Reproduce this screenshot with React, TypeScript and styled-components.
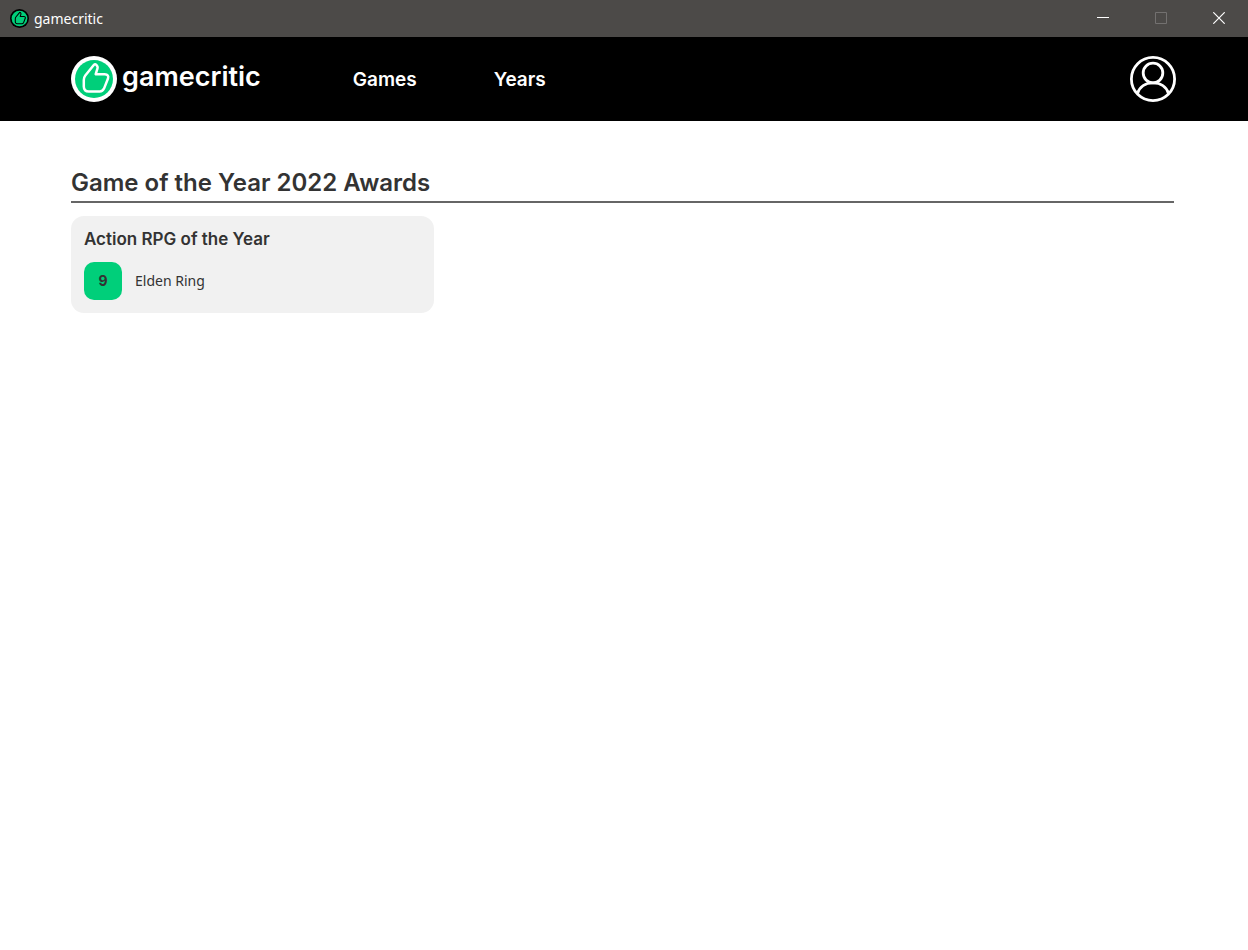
import React from "react";
import styled, { createGlobalStyle } from "styled-components";

const GlobalStyle = createGlobalStyle`
  *, *::before, *::after { box-sizing: border-box; }
  body {
    margin: 0;
    background: #fff;
    color: #333;
    font-family: "Noto Sans", "Open Sans", sans-serif;
    font-size: 14px;
  }
  h1, h2, p { margin: 0; }
`;

const headingFont = `"Inter", "Noto Sans", sans-serif`;

const TitleBar = styled.div`
  display: flex;
  align-items: center;
  height: 37px;
  padding-left: 10px;
  background: #4c4a48;
  color: #fff;
`;

const WindowTitle = styled.span`
  flex: 1;
  margin-left: 5px;
  line-height: 20px;
`;

const WindowButton = styled.button`
  display: flex;
  align-items: center;
  justify-content: center;
  width: 58px;
  height: 36px;
  padding: 0 0 2px;
  border: 0;
  background: none;
  color: #fff;

  &:disabled { color: #737170; }
`;

const Header = styled.header`
  display: flex;
  align-items: center;
  height: 84px;
  padding: 0 72px 0 71px;
  background: #000;
  color: #fff;
`;

const Brand = styled.a`
  display: flex;
  align-items: center;
  color: inherit;
  text-decoration: none;
`;

const BrandName = styled.span`
  margin-left: 5px;
  padding-bottom: 5px;
  font: 600 27px/36px ${headingFont};
`;

const Nav = styled.nav`
  display: flex;
  flex: 1;
  gap: 77px;
  margin-left: 92px;
  padding-top: 2px;
`;

const NavLink = styled.a`
  color: inherit;
  font: 600 19px/28px ${headingFont};
  text-decoration: none;
`;

const ProfileButton = styled.button`
  display: flex;
  padding: 0;
  border: 0;
  background: none;
  color: inherit;
`;

const Main = styled.main`
  padding: 46px 74px 46px 71px;
`;

const PageTitle = styled.h1`
  padding-bottom: 2px;
  border-bottom: 2px solid #666;
  font: 600 24px/32px ${headingFont};
`;

const AwardGrid = styled.div`
  display: grid;
  grid-template-columns: repeat(auto-fill, minmax(340px, 1fr));
  gap: 7px;
  margin-top: 13px;
`;

const AwardCard = styled.section`
  padding: 11px 13px 13px;
  border-radius: 13px;
  background: #f1f1f1;
`;

const AwardTitle = styled.h2`
  font: 600 17px/24px ${headingFont};
`;

const Winner = styled.div`
  display: flex;
  align-items: center;
  gap: 13px;
  margin-top: 11px;
`;

const WinnerName = styled.p`
  padding-bottom: 1px;
  line-height: 20px;
`;

const Score = styled.span`
  display: flex;
  align-items: center;
  justify-content: center;
  width: 38px;
  height: 38px;
  border-radius: 10px;
  background: #00cf7a;
  font: 700 14px/20px ${headingFont};
`;

function Logo({ size, ring }: { size: number; ring: string }) {
  return (
    <svg width={size} height={size} viewBox="0 0 46 46" aria-hidden="true">
      <circle cx="23" cy="23" r="23" fill={ring} />
      <circle cx="23" cy="23" r="19" fill="#00cf7a" />
      <path
        d="M23 8.800Q24.100 7.500 25.200 8.800L26.300 10.300Q26.900 11.200 26.500 12.300L24.700 18.200H33.700Q38.200 18.600 37 22.500L33 32.600Q31.700 35.500 28.800 35.500H17.800Q12.800 35.500 12.800 30.600V24Q12.800 21.400 14.300 19.500Z"
        fill="none"
        stroke={ring}
        strokeWidth="2.5"
        strokeLinejoin="round"
      />
    </svg>
  );
}

export default function App() {
  return (
    <>
      <GlobalStyle />
      <TitleBar>
        <Logo size={19} ring="#000" />
        <WindowTitle>gamecritic</WindowTitle>
        <WindowButton aria-label="Minimize">
          <svg width="12" height="12" viewBox="0 0 12 12" fill="none" stroke="currentColor">
            <path d="M0 5.5H12" />
          </svg>
        </WindowButton>
        <WindowButton aria-label="Maximize" disabled>
          <svg width="12" height="12" viewBox="0 0 12 12" fill="none" stroke="currentColor">
            <path d="M.5 .5H11.5V11.5H.5Z" />
          </svg>
        </WindowButton>
        <WindowButton aria-label="Close">
          <svg width="12" height="12" viewBox="0 0 12 12" fill="none" stroke="currentColor" strokeWidth="1.2">
            <path d="M.3 .3L11.7 11.7M11.7 .3L.3 11.7" />
          </svg>
        </WindowButton>
      </TitleBar>
      <Header>
        <Brand href="#">
          <Logo size={46} ring="#fff" />
          <BrandName>gamecritic</BrandName>
        </Brand>
        <Nav>
          <NavLink href="#games">Games</NavLink>
          <NavLink href="#years">Years</NavLink>
        </Nav>
        <ProfileButton aria-label="Profile">
          <svg width="46" height="46" viewBox="0 0 46 46" fill="none" stroke="currentColor" strokeWidth="2.8">
            <circle cx="23" cy="23" r="21.6" />
            <circle cx="23" cy="17" r="9.8" />
            <path d="M7.5 37.6C9.5 31 15.5 26.9 23 26.9S36.5 31 38.5 37.6" />
          </svg>
        </ProfileButton>
      </Header>
      <Main>
        <PageTitle>Game of the Year 2022 Awards</PageTitle>
        <AwardGrid>
          <AwardCard>
            <AwardTitle>Action RPG of the Year</AwardTitle>
            <Winner>
              <Score>9</Score>
              <WinnerName>Elden Ring</WinnerName>
            </Winner>
          </AwardCard>
        </AwardGrid>
      </Main>
    </>
  );
}
